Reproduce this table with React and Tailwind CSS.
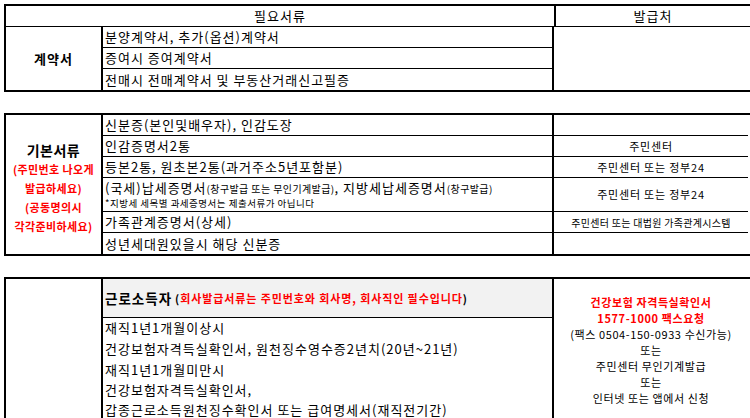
import React from "react";

const Row = ({ children, className = "" }) => (
  <div className={`h-[21px] border-b border-black flex items-center pl-[2px] text-[13px] tracking-[1px] whitespace-nowrap ${className}`}>
    {children}
  </div>
);

const App = () => {
  const basicRows = [
    { left: "신분증(본인및배우자), 인감도장", right: "" },
    { left: "인감증명서2통", right: "주민센터" },
    { left: "등본2통, 원초본2통(과거주소5년포함분)", right: "주민센터 또는 정부24" },
  ];
  return (
    <div className="w-[750px] h-[418px] overflow-hidden bg-white text-black font-['Noto_Sans_CJK_KR',sans-serif]">
      <div className="pl-[4px] pt-[4px] w-[800px]">
        {/* 계약서 */}
        <div className="border-2 border-black w-[760px]">
          <div className="flex h-[21px] border-b border-black">
            <div className="w-[550px] border-r-2 border-black flex items-center justify-center text-[13px] tracking-[1px]">필요서류</div>
            <div className="w-[194px] flex items-center justify-center text-[13px] tracking-[1px]">발급처</div>
          </div>
          <div className="flex">
            <div className="w-[97px] border-r-2 border-black flex items-center justify-center text-[13px] tracking-[1px] font-bold">계약서</div>
            <div className="w-[451px] border-r-2 border-black">
              <Row>분양계약서, 추가(옵션)계약서</Row>
              <Row>증여시 증여계약서</Row>
              <Row className="border-b-0 h-[19px]">전매시 전매계약서 및 부동산거래신고필증</Row>
            </div>
            <div className="flex-1"></div>
          </div>
        </div>

        {/* 기본서류 */}
        <div className="border-2 border-black w-[760px] mt-[21px]">
          <div className="flex">
            <div className="w-[97px] border-r-2 border-black flex flex-col items-center pt-[25px]">
              <div className="h-[20px] flex items-center text-[14px] tracking-[0.5px] font-bold">기본서류</div>
              <div className="text-[11px] font-bold text-[#ff0000] leading-[19px] tracking-[0.4px] text-center whitespace-nowrap">
                <div>(주민번호 나오게</div>
                <div>발급하세요)</div>
                <div>(공동명의시</div>
                <div>각각준비하세요)</div>
              </div>
            </div>
            <div className="w-[451px] border-r-2 border-black">
              {basicRows.map((r) => (
                <Row key={r.left}>{r.left}</Row>
              ))}
              <div className="h-[34px] border-b border-black pl-[2px] flex flex-col justify-center whitespace-nowrap">
                <div className="text-[13px] leading-[17px] tracking-[1px]">
                  (국세)납세증명서<span className="text-[10px] tracking-[0.4px]">(창구발급 또는 무인기계발급)</span>, 지방세납세증명서<span className="text-[10px] tracking-[0.4px]">(창구발급)</span>
                </div>
                <div className="text-[9.5px] leading-[13px] tracking-[0.5px]">*지방세 세목별 과세증명서는 제출서류가 아닙니다</div>
              </div>
              <Row>가족관계증명서(상세)</Row>
              <Row className="border-b-0 h-[20px]">성년세대원있을시 해당 신분증</Row>
            </div>
            <div className="flex-1">
              {basicRows.map((r) => (
                <div key={r.left} className="h-[21px] border-b border-black flex items-center justify-center text-[11px] tracking-[0.8px] w-[194px]">{r.right}</div>
              ))}
              <div className="h-[34px] border-b border-black flex items-center justify-center text-[11px] tracking-[0.8px] w-[194px]">주민센터 또는 정부24</div>
              <div className="h-[21px] border-b border-black flex items-center justify-center text-[10px] tracking-[0.3px] w-[194px] whitespace-nowrap">주민센터 또는 대법원 가족관계시스템</div>
              <div className="h-[20px]"></div>
            </div>
          </div>
        </div>

        {/* 근로소득자 */}
        <div className="border-2 border-black w-[760px] mt-[21px] h-[200px]">
          <div className="flex h-full">
            <div className="w-[97px] border-r-2 border-black"></div>
            <div className="w-[451px] border-r-2 border-black">
              <div className="h-[39px] bg-[#f2f2f2] border-b border-black flex items-center pl-[2px] whitespace-nowrap">
                <span className="text-[13.5px] tracking-[1px] font-bold">근로소득자</span>
                <span className="text-[11px] tracking-[0.9px] font-bold ml-[3px]">
                  (<span className="text-[#ff0000]">회사발급서류는 주민번호와 회사명, 회사직인 필수입니다</span>)
                </span>
              </div>
              <div className="text-[13px] leading-[16px] tracking-[1px] pl-[2px] whitespace-nowrap">
                <div className="h-[20px] flex items-center">재직1년1개월이상시</div>
                <div className="h-[21px] flex items-center">건강보험자격득실확인서, 원천징수영수증2년치(20년~21년)</div>
                <div className="h-[21px] flex items-center">재직1년1개월미만시</div>
                <div className="h-[20px] flex items-center">건강보험자격득실확인서,</div>
                <div className="h-[19px] flex items-center">갑종근로소득원천징수확인서 또는 급여명세서(재직전기간)</div>
              </div>
            </div>
            <div className="w-[194px] pt-[15px] text-center text-[11px] tracking-[0.6px] leading-[16px] whitespace-nowrap">
              <div className="font-bold text-[#ff0000]">건강보험 자격득실확인서</div>
              <div className="font-bold text-[#ff0000]">1577-1000 팩스요청</div>
              <div>(팩스 0504-150-0933 수신가능)</div>
              <div>또는</div>
              <div>주민센터 무인기계발급</div>
              <div>또는</div>
              <div>인터넷 또는 앱에서 신청</div>
            </div>
          </div>
        </div>
      </div>
    </div>
  );
};

export default App;
